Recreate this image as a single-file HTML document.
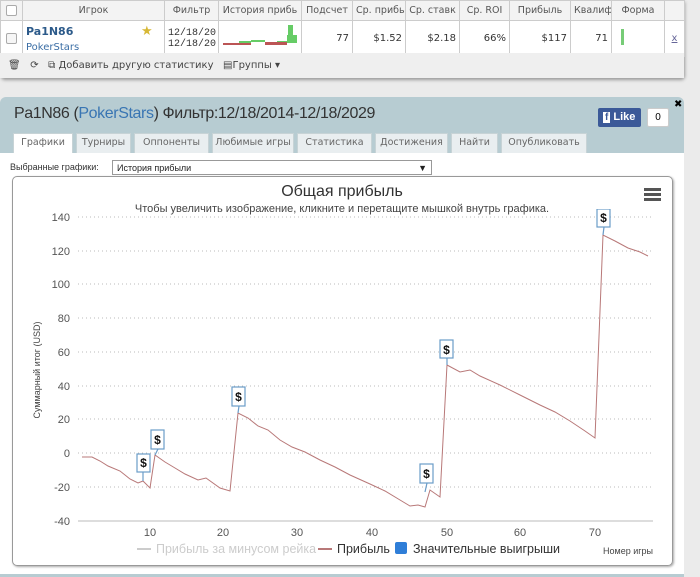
<!DOCTYPE html>
<html><head><meta charset="utf-8"><style>
*{margin:0;padding:0;box-sizing:border-box}
body{width:700px;height:574px;overflow:hidden;background:#ebebeb;font-family:"Liberation Sans","DejaVu Sans",sans-serif;position:relative}
.abs{position:absolute}
.top{left:0;top:0;width:684px;height:78px;background:#fff;box-shadow:1px 2px 3px #999;border-radius:0 0 4px 4px}
table{border-collapse:collapse;font-size:10px;color:#333;font-family:"DejaVu Sans",sans-serif}
td{border:1px solid #ccc;padding:0 3px;white-space:nowrap;overflow:hidden}
.hd td{height:20px;background:#f3f3f3;color:#555;text-align:center;font-size:9.5px}
.rw td{height:32px;text-align:right}
.tb{left:0;top:53px;width:684px;height:25px;background:#efefef;font-size:10px;color:#444;font-family:"DejaVu Sans",sans-serif;padding:7px 8px}
.panel{left:0;top:97px;width:684px;height:480px;background:#b7ccd2;border-radius:6px 6px 0 0}
.tab{top:133px;height:20px;background:#e9eef0;border:1px solid #c7d3d6;border-bottom:none;font-size:9.5px;color:#666;text-align:center;line-height:18px;font-family:"DejaVu Sans",sans-serif}
</style></head><body>
<div class="abs top">
<table style="width:684px;table-layout:fixed">
<colgroup><col style="width:22px"><col style="width:142px"><col style="width:54px"><col style="width:83px"><col style="width:51px"><col style="width:53px"><col style="width:54px"><col style="width:50px"><col style="width:61px"><col style="width:41px"><col style="width:53px"><col style="width:20px"></colgroup>
<tr class="hd"><td><div style="width:11px;height:11px;border:1px solid #aaa;border-radius:2px;background:#fff;margin:auto"></div></td><td>Игрок</td><td>Фильтр</td><td>История прибь</td><td>Подсчет</td><td>Ср. прибь</td><td>Ср. ставк</td><td>Ср. ROI</td><td>Прибыль</td><td>Квалиф</td><td>Форма</td><td></td></tr>
<tr class="rw"><td style="text-align:center"><div style="width:11px;height:11px;border:1px solid #aaa;border-radius:2px;background:#f6f6f6;margin:auto"></div></td>
<td style="text-align:left;position:relative"><div style="color:#2c5a8a;font-weight:bold;font-size:11px;margin-top:1px">Pa1N86</div><div style="color:#3b6ea5;font-size:10px;margin-top:4px">PokerStars</div><div class="abs" style="left:118px;top:3px;color:#d7b836;font-size:13px">★</div></td>
<td style="text-align:left;line-height:11px;font-family:'Liberation Mono',monospace">12/18/20<br>12/18/20</td>
<td style="padding:0"><svg width="83" height="32"><rect x="4" y="22" width="28" height="2" fill="#b55"/><rect x="20" y="20" width="12" height="2" fill="#6c6"/><rect x="32" y="19" width="14" height="2" fill="#6c6"/><rect x="46" y="21" width="22" height="3" fill="#b55"/><rect x="58" y="20" width="10" height="1" fill="#6c6"/><rect x="68" y="14" width="10" height="8" fill="#6c6"/><rect x="69" y="4" width="5" height="18" fill="#6c6"/></svg></td>
<td>77</td><td>$1.52</td><td>$2.18</td><td>66%</td><td>$117</td><td>71</td><td style="text-align:left"><div style="display:inline-block;width:3px;height:16px;background:#7c7;margin-left:6px"></div></td><td style="text-align:center;color:#669;text-decoration:underline">x</td></tr>
</table>
<div class="abs tb">🗑 &nbsp; ⟳ &nbsp; ⧉ Добавить другую статистику &nbsp; ▤Группы ▾</div>
</div>

<div class="abs panel"></div>
<div class="abs" style="left:14px;top:105px;font-size:16px;color:#333;letter-spacing:-0.4px">Pa1N86 (<span style="color:#3975b3">PokerStars</span>) Фильтр:12/18/2014-12/18/2029</div>
<div class="abs" style="left:598px;top:108px;width:43px;height:19px;background:#3b5998;border-radius:2px;color:#fff;font-size:11px;font-weight:bold;line-height:19px;padding-left:5px"><span style="background:#fff;color:#3b5998;padding:0 2px;font-size:10px">f</span> Like</div>
<div class="abs" style="left:647px;top:108px;width:22px;height:19px;background:#fff;border:1px solid #ccc;border-radius:2px;font-size:10px;text-align:center;line-height:17px">0</div>
<div class="abs" style="left:674px;top:99px;font-size:10px;font-weight:bold">✖</div>
<div class="abs tab" style="left:13px;width:60px;background:#fff;height:21px">Графики</div>
<div class="abs tab" style="left:76px;width:55px">Турниры</div>
<div class="abs tab" style="left:134px;width:75px">Оппоненты</div>
<div class="abs tab" style="left:212px;width:82px">Любимые игры</div>
<div class="abs tab" style="left:297px;width:75px">Статистика</div>
<div class="abs tab" style="left:375px;width:73px">Достижения</div>
<div class="abs tab" style="left:451px;width:47px">Найти</div>
<div class="abs tab" style="left:501px;width:86px">Опубликовать</div>
<div class="abs" style="left:0;top:153px;width:684px;height:421px;background:#fff"></div>
<div class="abs" style="left:10px;top:162px;font-size:9px;color:#333">Выбранные графики:</div>
<div class="abs" style="left:112px;top:160px;width:320px;height:15px;border:1px solid #999;font-size:9px;padding:2px 4px;color:#222">История прибыли<span style="float:right">▼</span></div>
<div class="abs" style="left:12px;top:176px;width:661px;height:390px;border:1px solid #999;border-radius:5px;box-shadow:1px 1px 2px #aaa"></div>
<div class="abs" style="left:0;top:183px;width:684px;text-align:center;font-size:16px;color:#333">Общая прибыль</div>
<div class="abs" style="left:0;top:203px;width:684px;text-align:center;font-size:11px;color:#444">Чтобы увеличить изображение, кликните и перетащите мышкой внутрь графика.</div>
<div class="abs" style="left:644px;top:188px;width:17px"><div style="height:3px;background:#555;margin-bottom:2px"></div><div style="height:3px;background:#555;margin-bottom:2px"></div><div style="height:3px;background:#555"></div></div>
<svg class="abs" style="left:0;top:0" width="700" height="574" font-family="Liberation Sans,sans-serif">
<g stroke="#bbb" stroke-dasharray="1,3" stroke-width="1">
<line x1="78" y1="217" x2="653" y2="217"/><line x1="78" y1="251" x2="653" y2="251"/><line x1="78" y1="284" x2="653" y2="284"/><line x1="78" y1="318" x2="653" y2="318"/><line x1="78" y1="352" x2="653" y2="352"/><line x1="78" y1="386" x2="653" y2="386"/><line x1="78" y1="419" x2="653" y2="419"/><line x1="78" y1="453" x2="653" y2="453"/><line x1="78" y1="487" x2="653" y2="487"/>
</g>
<line x1="78" y1="521" x2="653" y2="521" stroke="#bbb"/>
<g font-size="11" fill="#555" text-anchor="end">
<text x="70" y="221">140</text><text x="70" y="255">120</text><text x="70" y="288">100</text><text x="70" y="322">80</text><text x="70" y="356">60</text><text x="70" y="390">40</text><text x="70" y="423">20</text><text x="70" y="457">0</text><text x="70" y="491">-20</text><text x="70" y="525">-40</text>
</g>
<g font-size="11" fill="#555" text-anchor="middle">
<text x="150" y="536">10</text><text x="223" y="536">20</text><text x="297" y="536">30</text><text x="372" y="536">40</text><text x="447" y="536">50</text><text x="520" y="536">60</text><text x="595" y="536">70</text>
</g>
<text transform="translate(40,370) rotate(-90)" font-size="9" fill="#444" text-anchor="middle">Суммарный итог (USD)</text>
<polyline fill="none" stroke="#b87878" stroke-width="1" points="82,457 92,457 100,461 108,466 120,471 130,479 138,483 143,481 150,488 155,455 165,462 175,468 185,474 198,480 206,478 220,488 230,491 238,413 248,418 258,426 268,430 280,440 292,447 305,452 320,460 335,467 350,475 370,484 385,491 400,500 410,506 418,505 425,507 430,490 440,497 447,365 460,372 470,370 480,376 500,385 520,395 540,405 555,412 570,421 585,431 595,438 603,235 615,241 628,248 640,252 648,256"/>
<g stroke="#6a9cc8" fill="#fff" stroke-width="1.2">
<line x1="143" y1="472" x2="143" y2="481"/><rect x="137" y="454" width="13" height="18"/>
<line x1="158" y1="449" x2="155" y2="455"/><rect x="151" y="430" width="13" height="19"/>
<line x1="239" y1="406" x2="238" y2="413"/><rect x="232" y="387" width="13" height="19"/>
<line x1="447" y1="358" x2="447" y2="365"/><rect x="440" y="340" width="13" height="18"/>
<line x1="427" y1="483" x2="425" y2="492"/><rect x="420" y="464" width="13" height="19"/>
<line x1="604" y1="227" x2="603" y2="235"/><rect x="597" y="209" width="13" height="18"/>
</g>
<rect x="595" y="200" width="20" height="9" fill="#fff"/>
<g font-size="12" font-weight="bold" fill="#111" text-anchor="middle">
<text x="143.5" y="467">$</text><text x="157.5" y="444">$</text><text x="238.5" y="401">$</text><text x="446.5" y="354">$</text><text x="426.5" y="478">$</text><text x="603.5" y="222">$</text>
</g>
<line x1="137" y1="549" x2="151" y2="549" stroke="#ccc" stroke-width="2"/>
<text x="156" y="553" font-size="12.5" fill="#ccc">Прибыль за минусом рейка</text>
<line x1="318" y1="549" x2="332" y2="549" stroke="#b87878" stroke-width="2"/>
<text x="337" y="553" font-size="12.5" fill="#333">Прибыль</text>
<rect x="395" y="542" width="12" height="12" rx="2" fill="#2f7ed8"/>
<text x="413" y="553" font-size="12.5" fill="#333">Значительные выигрыши</text>
<text x="653" y="554" font-size="9" fill="#444" text-anchor="end">Номер игры</text>
</svg>
</body></html>
